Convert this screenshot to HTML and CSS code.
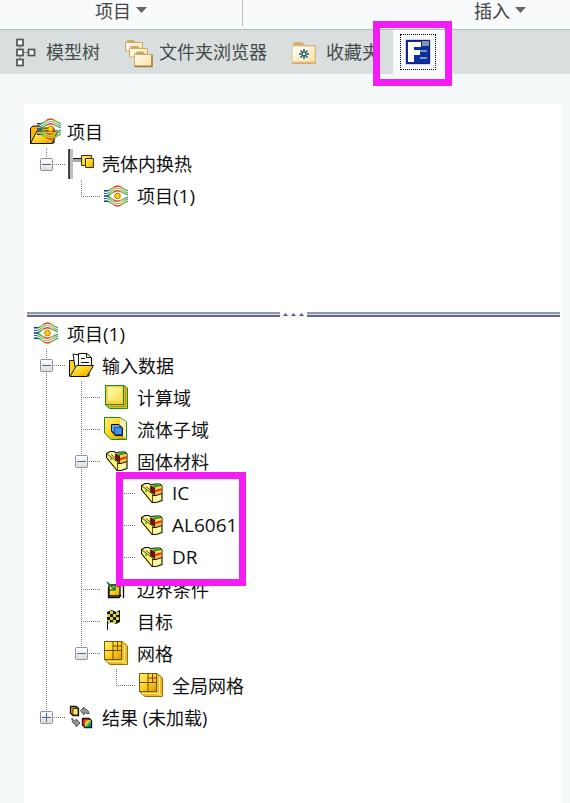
FILE: index.html
```html
<!DOCTYPE html>
<html lang="zh-CN">
<head>
<meta charset="utf-8">
<title>项目</title>
<link rel="stylesheet" href="styles.css">
</head>
<body>
<svg class="defs" aria-hidden="true">
  <defs>
    <linearGradient id="gold" x1="0" y1="0" x2="1" y2="1"><stop offset="0" stop-color="#fff27a"/><stop offset=".5" stop-color="#ffd21c"/><stop offset="1" stop-color="#d99a00"/></linearGradient>
    <linearGradient id="tile" x1="0" y1="0" x2="1" y2="1"><stop offset="0" stop-color="#fffab8"/><stop offset=".5" stop-color="#ffec80"/><stop offset="1" stop-color="#ffdc50"/></linearGradient>
    <linearGradient id="pale" x1="0" y1="0" x2="1" y2="1"><stop offset="0" stop-color="#fff"/><stop offset="1" stop-color="#ffe0a0"/></linearGradient>
    <linearGradient id="flow" gradientUnits="userSpaceOnUse" x1="1" y1="0" x2="25" y2="0"><stop offset="0" stop-color="#1414c8"/><stop offset=".12" stop-color="#1838b0"/><stop offset=".2" stop-color="#20a838"/><stop offset=".35" stop-color="#b0b040"/><stop offset=".45" stop-color="#e83a28"/><stop offset=".6" stop-color="#e83a28"/><stop offset=".75" stop-color="#c4a52a"/><stop offset="1" stop-color="#30a878"/></linearGradient>
    <linearGradient id="flow2" gradientUnits="userSpaceOnUse" x1="1" y1="0" x2="25" y2="0"><stop offset="0" stop-color="#1414c8"/><stop offset=".15" stop-color="#18a040"/><stop offset=".5" stop-color="#60c060"/><stop offset=".8" stop-color="#48b060"/><stop offset="1" stop-color="#30a0a0"/></linearGradient>
    <linearGradient id="box" x1="0" y1="0" x2="0" y2="1"><stop offset="0" stop-color="#fff"/><stop offset="1" stop-color="#dcdcdc"/></linearGradient>
    <linearGradient id="heat" x1="0" y1="0" x2="1" y2="1"><stop offset="0" stop-color="#f02020"/><stop offset=".35" stop-color="#ffe020"/><stop offset=".6" stop-color="#20c840"/><stop offset=".85" stop-color="#2050f0"/></linearGradient>
    <symbol id="v" viewBox="0 0 35 32"><path class="dots" d="M17.5 0V32"/></symbol>
    <symbol id="tee" viewBox="0 0 35 32"><path class="dots" d="M17.5 0V32M17 16.5H37"/></symbol>
    <symbol id="end" viewBox="0 0 35 32"><path class="dots" d="M17.5 0V17M17 16.5H37"/></symbol>
    <symbol id="minus" viewBox="0 0 35 32"><rect x="11.5" y="10.5" width="12" height="12" rx="1" fill="url(#box)" stroke="#919191"/><path d="M13 16.5H22" stroke="#4565aa"/></symbol>
    <symbol id="plus" viewBox="0 0 35 32"><rect x="11.5" y="10.5" width="12" height="12" rx="1" fill="url(#box)" stroke="#919191"/><path d="M13 16.5H22M17.5 12V21" stroke="#4565aa"/></symbol>
    <symbol id="waves" viewBox="0 0 26 24">
      <g fill="none" stroke="url(#flow)" stroke-width="1.5">
        <path d="M1 6.800H5C8 6.500 10 2 14.500 2S20 6 25 6.800M1 17.200H5C8 17.500 10 22 14.500 22S20 18 25 17.200"/>
        <path d="M1 12H4C7 11 10.500 6.800 14.500 6.800S21 10 25 10.800M4 12C7 13 10.500 17.200 14.500 17.200S21 14 25 13.200"/>
      </g>
      <path d="M1 9.400H4C8 9 10 4.400 14.500 4.400S20 8.200 25 8.800M1 14.600H4C8 15 10 19.600 14.500 19.600S20 15.800 25 15.200" fill="none" stroke="url(#flow2)"/>
      <circle cx="14.500" cy="12" r="2.800" fill="#ffd400" stroke="#b07818"/>
    </symbol>
    <symbol id="material" viewBox="0 0 26 26">
      <path d="M3.500 5.500L7 3.500H11L13 5L16 4H22L24 6V20.500L18 22.500H14L3.500 9.500Z" fill="#eeee60" stroke="#171700" stroke-width="1.100"/>
      <path d="M4.500 6.500L14 14V21L4.500 9.500Z" fill="#fbf470"/>
      <path d="M6 5.500L8 4H10.500L12.500 6V10L6 6Z" fill="#fffbb8"/>
      <path d="M4 6L14.500 14V22M8 6.500L12 9.500M8 10V12" fill="none" stroke="#404000" stroke-width=".9"/>
      <path d="M12.500 6L17 8V15L12.500 11.500Z" fill="#7b1010" stroke="#301000" stroke-width=".7"/>
      <path d="M14 5.500L21.500 4.500L23.500 6L17 7.500Z" fill="#18a040"/><path d="M17 7.500L23.500 6V9L17 10.500Z" fill="#ffd830"/><path d="M17 10L23.500 8V10.500L17 12.500Z" fill="#f03820"/><path d="M17 12.500L23.500 10.500V13L17 15Z" fill="#f4c028"/>
      <path d="M15.500 16.500L23 14.500V19.500L18 21.500H15.500Z" fill="#fff4b0"/><path d="M14.500 15.500H18L24 13.500" fill="none" stroke="#111"/>
    </symbol>
    <symbol id="mesh" viewBox="0 0 26 26">
      <path d="M2 1.500H19.500L24.500 6V24.500H7L1.500 19.500Z" fill="#edbb28" stroke="#a07000"/>
      <path d="M1.500 1.500H18.500V19.500H1.500Z" fill="url(#gold)" stroke="#805500"/>
      <path d="M21.500 5V21.500M4 21.500H19.500L23.500 24" fill="none" stroke="#fff0a0"/>
      <path d="M1.500 10.500H18.500M10 1.500V19.500M10 6H18.500M14.500 1.500V10.500" fill="none" stroke="#704800"/>
    </symbol>
  </defs>
</svg>

<header class="groups">
  <div class="group project">项目<i class="caret"></i></div>
  <div class="group insert">插入<i class="caret"></i></div>
</header>

<nav class="tabs">
  <div class="tab model"><svg width="21" height="29" viewBox="0 0 21 29"><path d="M5 6V22M5 14.500H14" stroke="#888"/><g fill="#fff" stroke="#505555" stroke-width="1.700"><rect x="2" y="1.500" width="6" height="6"/><rect x="2" y="11.500" width="6" height="6"/><rect x="13.500" y="11.500" width="6" height="6"/><rect x="2" y="21.500" width="6" height="6"/></g></svg><span>模型树</span></div>
  <div class="tab folders"><svg width="29" height="29" viewBox="0 0 29 29"><g fill="url(#pale)" stroke="#d0a865"><path d="M1.500 12V3L4 1.500H10L12 3.500H18.500V12Z"/><path d="M5.500 18V9L8 7.500H14L16 9.500H23.500V18Z"/><path d="M10.500 27V15L13 13H19L21 15.500H28V27Z"/></g><path d="M2 4L4 1.500H10L12 4M6 10L8 7.500H14L16 10M11 16L13 13H19L21 16" fill="#cda768"/><path d="M10.500 27.500H28V16" fill="none" stroke="#a87932" stroke-width="1.500"/></svg><span>文件夹浏览器</span></div>
  <div class="tab favorites"><svg width="26" height="24" viewBox="0 0 26 24"><path d="M1 5L3 1H11L14 4H25V23H1Z" fill="#d4ae72"/><path d="M1 5H24V21H1Z" fill="url(#pale)" stroke="#e0c490"/><path d="M13 8V18M8 13H18M9.500 9.500L16.500 16.500M16.500 9.500L9.500 16.500" stroke="#126078" stroke-width="1.500"/><circle cx="13" cy="13" r="1.300" fill="#fff"/></svg><span>收藏夹</span></div>
  <div class="tab active"><div class="focus"><svg width="26" height="26" viewBox="0 0 26 26"><path d="M.5.500H25.500V25.500H.5Z" fill="#fff" stroke="#d0d4dc"/><path d="M1.500 1.500H24.500V24.500H1.500Z" fill="#0830a0" stroke="#1c1880"/><path d="M17 2H24V7H17ZM15 11H22V13H15ZM15 18H22V20H15Z" fill="#8295ad"/><path d="M3 3H16V8H9V11H15V16H9V23H3Z" fill="#fff"/></svg></div></div>
  <div class="marker tab-marker"></div>
</nav>

<main class="panel">
  <section class="tree upper">
    <div class="row"><svg class="icon" viewBox="0 0 35 32"><path d="M1.500 27V12L4 10H11L13 12H25V27Z" fill="#f6b900" stroke="#111"/><path d="M1.500 27.500L8 15H29L23 27.500Z" fill="url(#gold)" stroke="#111"/><use href="#waves" x="7" y="1" width="26" height="24"/></svg><span>项目</span></div>
    <div class="row"><svg class="cell"><use href="#end"/><use href="#minus"/></svg><svg class="icon" viewBox="0 0 35 32"><path d="M5 1H9V31H5Z" fill="#bcc0c4"/><path d="M5 1V31" stroke="#111" stroke-width="1.500"/><path d="M9 10H17V14H9Z" fill="#aaa"/><path d="M9 10.500H17" stroke="#111"/><path d="M17.500 7.500H27.500V17.500H17.500Z" fill="url(#gold)" stroke="#3a3000"/><path d="M21.500 10.500H29.500V19.500H21.500Z" fill="url(#gold)" stroke="#3a3000"/></svg><span>壳体内换热</span></div>
    <div class="row"><i class="cell"></i><svg class="cell"><use href="#end"/></svg><svg class="icon"><use href="#waves" x="4" y="4" width="26" height="24"/></svg><span>项目<b class="latin">(1)</b></span></div>
  </section>

  <div class="splitter"><i class="bar"></i><svg width="27" height="5" viewBox="0 0 27 5"><path d="M3 4L5.500 1L8 4ZM11 4L13.500 1L16 4ZM19 4L21.500 1L24 4Z" fill="#55558c"/></svg><i class="bar"></i></div>

  <section class="tree lower">
    <div class="row"><svg class="icon"><use href="#waves" x="4" y="4" width="26" height="24"/></svg><span>项目<b class="latin">(1)</b></span></div>
    <div class="row"><svg class="cell"><use href="#tee"/><use href="#minus"/></svg><svg class="icon" viewBox="0 0 35 32"><path d="M5.500 27V11.500H12L14 14H25V27Z" fill="#ffd320" stroke="#111"/><path d="M9 5L15 6V18H11Z" fill="#fff" stroke="#111"/><path d="M14.500 4.500H23L27.500 8.500V20H14.500Z" fill="#fff" stroke="#111"/><path d="M22.500 4.500V8.500H27M17 9.500H21M17 13.500H25" fill="none" stroke="#111"/><path d="M6 27.500L12.500 16.500H29.500L23 27.500Z" fill="url(#gold)" stroke="#111"/></svg><span>输入数据</span></div>
    <div class="row"><svg class="cell"><use href="#v"/></svg><svg class="cell"><use href="#tee"/></svg><svg class="icon" viewBox="0 0 35 32"><path d="M6.500 4.500H25L28.500 7V27.500H10.500L6.500 24Z" fill="#e8bc28" stroke="#159215"/><path d="M26.500 6.500V25.500H9.500" fill="none" stroke="#b08a10" stroke-width=".8"/><rect x="6.500" y="4.500" width="18" height="19" fill="#f8d040" stroke="#159215"/><path d="M9 6.500H23V20H9Z" fill="url(#tile)"/></svg><span>计算域</span></div>
    <div class="row"><svg class="cell"><use href="#v"/></svg><svg class="cell"><use href="#tee"/></svg><svg class="icon" viewBox="0 0 35 32"><path d="M5.500 4.500H21L27.500 9V26.500H12L5.500 20Z" fill="url(#gold)" stroke="#159215"/><path d="M21 5L27 9V26L21 20Z" fill="#fff0b0"/><path d="M12.500 11.500H20L23.500 15V22.500H16L12.500 18Z" fill="#2468c0" stroke="#111"/><path d="M13 12H20V18H13Z" fill="#58a8f4"/><path d="M15.500 14.500H23V21.500H15.500Z" fill="#4490e8" stroke="#103878" stroke-width=".7"/></svg><span>流体子域</span></div>
    <div class="row"><svg class="cell"><use href="#v"/></svg><svg class="cell"><use href="#tee"/><use href="#minus"/></svg><svg class="icon"><use href="#material" x="4" y="3" width="26" height="26"/></svg><span>固体材料</span></div>
    <div class="row"><svg class="cell"><use href="#v"/></svg><svg class="cell"><use href="#v"/></svg><svg class="cell"><use href="#tee"/></svg><svg class="icon"><use href="#material" x="4" y="3" width="26" height="26"/></svg><span class="latin">IC</span></div>
    <div class="row"><svg class="cell"><use href="#v"/></svg><svg class="cell"><use href="#v"/></svg><svg class="cell"><use href="#tee"/></svg><svg class="icon"><use href="#material" x="4" y="3" width="26" height="26"/></svg><span class="latin">AL6061</span></div>
    <div class="row"><svg class="cell"><use href="#v"/></svg><svg class="cell"><use href="#v"/></svg><svg class="cell"><use href="#end"/></svg><svg class="icon"><use href="#material" x="4" y="3" width="26" height="26"/></svg><span class="latin">DR</span></div>
    <div class="row"><svg class="cell"><use href="#v"/></svg><svg class="cell"><use href="#tee"/></svg><svg class="icon" viewBox="0 0 35 32"><path d="M10 12H21V23H10Z" fill="url(#gold)" stroke="#111" stroke-width="1.300"/><path d="M9.500 14V24.500H20L22 22M21 12L24.500 13V25" fill="none" stroke="#111" stroke-width="1.300"/><path d="M8 9L15 16M16 12V17H11" fill="none" stroke="#108030" stroke-width="1.600"/><path d="M24 10L18 14" stroke="#e02020" stroke-width="2"/></svg><span>边界条件</span></div>
    <div class="row"><svg class="cell"><use href="#v"/></svg><svg class="cell"><use href="#tee"/></svg><svg class="icon" viewBox="0 0 35 32"><path d="M8 7L13 5L17 7L21 5V17L17 19L13 17L8 19Z" fill="#171700"/><path d="M11 6H14V9H11ZM17 7H20V10H17ZM8 9H11V12H8ZM14 9H17V12H14ZM11 12H14V15H11ZM17 12H20V15H17ZM8 15H11V18H8ZM14 15H17V18H14Z" fill="#d8d048"/><path d="M8.500 16V25" stroke="#111"/></svg><span>目标</span></div>
    <div class="row"><svg class="cell"><use href="#v"/></svg><svg class="cell"><use href="#end"/><use href="#minus"/></svg><svg class="icon"><use href="#mesh" x="4" y="3" width="26" height="26"/></svg><span>网格</span></div>
    <div class="row"><svg class="cell"><use href="#v"/></svg><i class="cell"></i><svg class="cell"><use href="#end"/></svg><svg class="icon"><use href="#mesh" x="4" y="3" width="26" height="26"/></svg><span>全局网格</span></div>
    <div class="row"><svg class="cell"><use href="#end"/><use href="#plus"/></svg><svg class="icon" viewBox="0 0 35 32"><path d="M6.500 5.500H12L14.500 7.500V14.500H9L6.500 12Z" fill="#e8a810" stroke="#111" stroke-width="1.300"/><path d="M9 7.500H14V14H9Z" fill="#ffe850" stroke="#111" stroke-width=".8"/><path d="M16.500 9.500L20 6V8C23 8 25 10 25 13L20 11.500V14ZM8 17C9 19 10 20 12 20V18L16 22L12 26V23.500C9 23 8 21 8 17Z" fill="#999" stroke="#555"/><path d="M18.500 17.500H25L27.500 19.500V26.500H21L18.500 24Z" fill="#e83030" stroke="#111" stroke-width="1.300"/><path d="M21 19H27V26H21Z" fill="url(#heat)"/></svg><span>结果 (未加载)</span></div>
    <div class="marker tree-marker"></div>
  </section>
</main>
</body>
</html>
```

FILE: styles.css
```css
* { box-sizing: border-box; }
body { margin: 0; width: 570px; height: 803px; overflow: hidden; display: flex; flex-direction: column; background: #f5f9fa; color: #111; font: 18px/32px "Open Sans", "Noto Sans CJK SC", sans-serif; }
.defs { position: absolute; width: 0; height: 0; }
.dots { fill: none; stroke: #777; stroke-dasharray: 1 1; shape-rendering: crispEdges; }
.groups { height: 30px; flex: none; display: flex; background: #f8fafc; border-bottom: 1px solid #b1c1c0; color: #444; line-height: 23px; }
.group { display: flex; height: 26px; gap: 5px; }
.project { width: 243px; padding-left: 95px; border-right: 1px solid #b8bcbf; }
.insert { padding-left: 231px; }
.caret { width: 11px; height: 6px; margin-top: 7px; background: #666; clip-path: polygon(0 0, 100% 0, 50% 100%); }
.tabs { position: relative; height: 44px; flex: none; display: flex; background: #d9dfde; color: #454b4b; line-height: 44px; }
.tab { display: flex; align-items: center; white-space: nowrap; }
.model { padding-left: 15px; width: 124px; gap: 10px; }
.folders { width: 167px; gap: 6px; }
.folders svg { margin-top: 2px; }
.favorites { width: 102px; gap: 9px; }
.favorites svg { margin-top: 2px; }
.active { width: 52px; background: #f8fafc; padding: 0 0 1px 7px; }
.focus { width: 36px; height: 36px; border: 1px dotted #000; display: grid; place-items: center; }
.marker { position: absolute; border: 7px solid #f41cf4; }
.tab-marker { left: 373px; top: -9px; width: 79px; height: 65px; z-index: 1; }
.panel { width: 537px; height: 699px; margin: 30px 0 0 24px; padding: 12px 0 0 3px; background: #fff; }
.tree { padding-left: 2px; }
.upper { height: 196px; }
.splitter { display: flex; height: 5px; width: 533px; }
.bar:first-child { width: 253px; }
.bar:last-child { flex: 1; }
.bar { background: linear-gradient(#9296ad 0 2px, #d8dcec 2px 3px, #626980 3px 5px); }
.lower { position: relative; }
.tree-marker { left: 89px; top: 155px; width: 130px; height: 114px; }
.row { display: flex; height: 32px; line-height: 32px; white-space: nowrap; }
.cell, .icon { width: 35px; height: 32px; flex: none; }
.cell, symbol { overflow: visible; }
.row span { margin-left: 3px; }
.lower .row > span:not(.latin) { padding-top: 1px; }
.latin { font-size: 19px; font-weight: 400; line-height: 1; }
.row > .latin { line-height: 32px; }
```
